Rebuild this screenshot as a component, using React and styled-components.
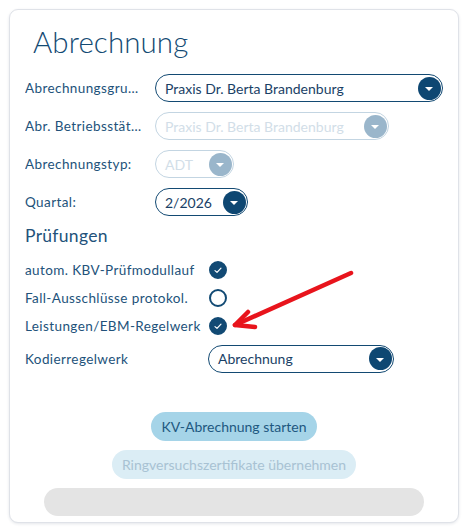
import React from 'react';
import styled, { createGlobalStyle } from 'styled-components';

const GlobalStyle = createGlobalStyle`
  html, body {
    margin: 0;
    padding: 0;
    background: #ffffff;
  }
  body {
    font-family: Lato, "Open Sans", sans-serif;
    color: #1a4c74;
  }
`;

const Page = styled.div`
  padding: 9px;
`;

const Card = styled.div`
  position: relative;
  box-sizing: border-box;
  width: 450px;
  height: 514px;
  border: 1px solid #dfe2e8;
  border-radius: 9px;
  box-shadow: 0 1px 3px rgba(40, 60, 90, 0.12);
  background: #fff;
  padding: 14px 15px 6px 15px;
  display: flex;
  flex-direction: column;
`;

const Title = styled.h1`
  margin: 0 0 0 8px;
  font-size: 29.5px;
  line-height: 36px;
  font-weight: 300;
  color: #134a73;
  letter-spacing: 0.1px;
`;

const FieldList = styled.div`
  margin-top: 14px;
  display: flex;
  flex-direction: column;
  gap: 10px;
`;

const Row = styled.div`
  display: grid;
  grid-template-columns: ${p => p.$labelWidth}px auto;
  align-items: center;
  justify-content: start;
  height: ${p => p.$height || 28}px;
`;

const Label = styled.span`
  font-size: 13.5px;
  letter-spacing: 0.4px;
  color: #22527a;
  white-space: nowrap;
  overflow: hidden;
  text-overflow: ellipsis;
  padding-right: ${p => p.$gap ?? 12}px;
`;

const Select = styled.div`
  box-sizing: border-box;
  width: ${p => p.$width}px;
  height: 28px;
  border: 1.5px solid ${p => (p.$disabled ? '#c3d5e2' : '#134a73')};
  border-radius: 15px;
  display: flex;
  align-items: center;
  justify-content: space-between;
  padding: 0 1.5px 0 9px;
`;

const Value = styled.span`
  font-size: 14px;
  color: ${p => (p.$disabled ? '#d2dee8' : '#1a3f66')};
  white-space: nowrap;
`;

const Caret = styled.span`
  width: 23px;
  height: 23px;
  border-radius: 50%;
  background: ${p => (p.$disabled ? '#9ab6cb' : '#0e4772')};
  display: flex;
  align-items: center;
  justify-content: center;
  flex-shrink: 0;

  &::after {
    content: '';
    width: 0;
    height: 0;
    margin-top: 2px;
    border-left: 4px solid transparent;
    border-right: 4px solid transparent;
    border-top: 4.5px solid #ffffff;
  }
`;

const Section = styled.h2`
  margin: 9px 0 0 0;
  font-size: 17.5px;
  line-height: 22px;
  font-weight: 400;
  letter-spacing: 0.3px;
  color: #22527a;
`;

const CheckList = styled.div`
  margin-top: 9px;
  display: flex;
  flex-direction: column;
`;

const Check = styled.span`
  box-sizing: border-box;
  width: 18px;
  height: 18px;
  border-radius: 50%;
  border: 2px solid #124a74;
  background: ${p => (p.$checked ? '#124a74' : '#fff')};
  display: flex;
  align-items: center;
  justify-content: center;
`;

const Actions = styled.div`
  margin-top: auto;
  display: flex;
  flex-direction: column;
  align-items: center;
  gap: 9px;
`;

const Button = styled.button`
  box-sizing: border-box;
  height: 29px;
  border: none;
  border-radius: 15px;
  padding: 0 10px;
  font-family: Lato, "Open Sans", sans-serif;
  font-size: 14px;
  background: ${p => (p.$disabled ? '#dbedf5' : '#a5d4e8')};
  color: ${p => (p.$disabled ? '#a8c2d3' : '#1e5880')};
`;

const Progress = styled.div`
  width: 380px;
  height: 28px;
  border-radius: 14px;
  background: #e4e4e4;
`;

const Annotation = styled.svg`
  position: absolute;
  left: 0;
  top: 0;
  pointer-events: none;
`;

function Dropdown({ value, width, disabled }) {
  return (
    <Select $width={width} $disabled={disabled}>
      <Value $disabled={disabled}>{value}</Value>
      <Caret $disabled={disabled} />
    </Select>
  );
}

function Tick({ checked }) {
  return (
    <Check $checked={checked}>
      {checked && (
        <svg width="8" height="7" viewBox="0 0 8 7">
          <path d="M1 3.6 L3 5.4 L7 1.2" fill="none" stroke="#fff" strokeWidth="1.2" strokeLinecap="round" strokeLinejoin="round" />
        </svg>
      )}
    </Check>
  );
}

const fields = [
  { label: 'Abrechnungsgruppe', value: 'Praxis Dr. Berta Brandenburg', width: 288 },
  { label: 'Abr. Betriebsstätte', value: 'Praxis Dr. Berta Brandenburg', width: 234, disabled: true },
  { label: 'Abrechnungstyp:', value: 'ADT', width: 79, disabled: true },
  { label: 'Quartal:', value: '2/2026', width: 93 },
];

const checks = [
  { label: 'autom. KBV-Prüfmodullauf', checked: true },
  { label: 'Fall-Ausschlüsse protokol.', checked: false },
  { label: 'Leistungen/EBM-Regelwerk', checked: true },
];

export default function App() {
  return (
    <Page>
      <GlobalStyle />
      <Card>
        <Title>Abrechnung</Title>
        <FieldList>
          {fields.map(f => (
            <Row key={f.label} $labelWidth={130}>
              <Label>{f.label}</Label>
              <Dropdown value={f.value} width={f.width} disabled={f.disabled} />
            </Row>
          ))}
        </FieldList>
        <Section>Prüfungen</Section>
        <CheckList>
          {checks.map(c => (
            <Row key={c.label} $labelWidth={184}>
              <Label $gap={4}>{c.label}</Label>
              <Tick checked={c.checked} />
            </Row>
          ))}
          <Row $labelWidth={183} $height={37}>
            <Label $gap={4}>Kodierregelwerk</Label>
            <Dropdown value="Abrechnung" width={186} />
          </Row>
        </CheckList>
        <Actions>
          <Button>KV-Abrechnung starten</Button>
          <Button $disabled>Ringversuchszertifikate übernehmen</Button>
          <Progress />
        </Actions>
        <Annotation width="450" height="514" viewBox="0 0 450 514">
          <g stroke="#e8141c" strokeWidth="4.5" strokeLinecap="round" strokeLinejoin="round" fill="none">
            <path d="M341 263 L225 315" />
            <path d="M238 302 L225 315 L245 317" />
          </g>
        </Annotation>
      </Card>
    </Page>
  );
}
